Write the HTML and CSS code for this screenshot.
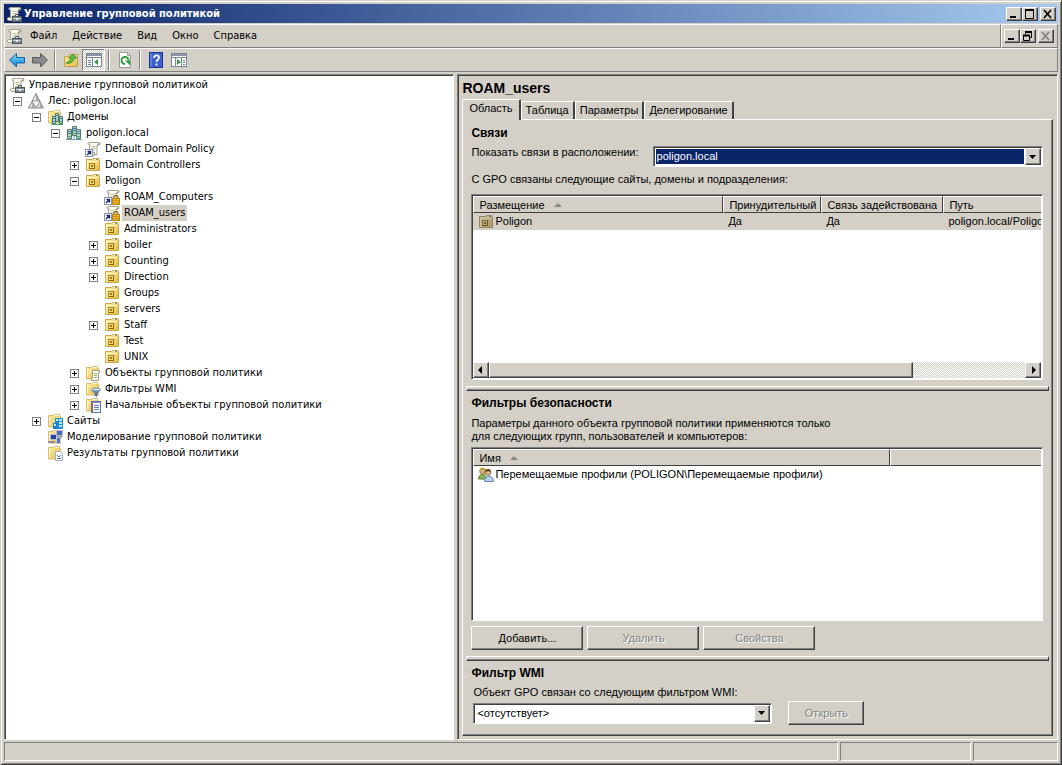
FILE: index.html
```html
<!DOCTYPE html>
<html lang="ru">
<head>
    <meta charset="UTF-8">
    <meta name="viewport" content="width=device-width, initial-scale=1.0">
    <title>Управление групповой политикой</title>
    <link rel="stylesheet" href="styles.css">
</head>
<body>
    <!-- Icon sprite -->
    <svg class="sprite" aria-hidden="true">
        <defs>
            <linearGradient id="g-gold" x1="0" y1="0" x2="1" y2="1">
                <stop offset="0" stop-color="#fff0a8"/>
                <stop offset="1" stop-color="#e6bd48"/>
            </linearGradient>
            <linearGradient id="g-blue" x1="0" y1="0" x2="0" y2="1">
                <stop offset="0" stop-color="#7fdcff"/>
                <stop offset="1" stop-color="#0a7fd0"/>
            </linearGradient>
        </defs>
        <symbol id="i-scroll" viewBox="0 0 16 16">
            <path d="M4.500 1.500h9c1.500 0 1.500 2.500 0 2.500h-1.500v9.500h-7.500z" fill="#fdfcf0" stroke="#a5a190"/>
            <path d="M4.500 1.500c-2 0-2 2.500 0 2.500h1" fill="#e9e5cd" stroke="#a5a190"/>
            <path d="M12 4h2c1.500-.5 1-2.500-.5-2.500" fill="#d8d3b8" stroke="#8d8a78"/>
            <path d="M6.500 5.500h4M6.500 7.500h4M6.500 9.500h3" stroke="#bdbaa9"/>
            <path d="M2.500 11.500h7v3h-7c-1.500 0-1.500-3 0-3z" fill="#f4f0da" stroke="#a5a190"/>
        </symbol>
        <symbol id="i-gpmc" viewBox="0 0 16 16">
            <use href="#i-scroll"/>
            <path d="M9.500 10v-1.500h3v1.500" fill="none" stroke="#4e565e"/>
            <rect x="6.500" y="10.500" width="9" height="5" fill="#7d8994" stroke="#4e565e"/>
            <path d="M7 12.500h8" stroke="#cdd5dc"/>
            <path d="M10 12h2v2h-2z" fill="#e8edf0"/>
        </symbol>
        <symbol id="i-forest" viewBox="0 0 16 16">
            <path d="M8 .5l3.800 7.500h-7.600z" fill="#f0f0f0" stroke="#6b6b6b" stroke-width=".8"/>
            <path d="M4.200 8l3.600 7h-7.300zM11.800 8l3.700 7h-7.300z" fill="#e4e4e4" stroke="#6b6b6b" stroke-width=".8"/>
            <path d="M4.200 8h7.600l-3.800 7z" fill="#f4f4f4" stroke="#8a8a8a" stroke-width=".6"/>
            <path d="M8 1.500v6.200h3zM4.200 9v5.700h3zM11.800 9v5.700h3z" fill="#a4a4a4"/>
        </symbol>
        <symbol id="i-folder" viewBox="0 0 16 16">
            <path d="M1.500 2.500h5l1-1h5v2h1v10.500h-12z" fill="url(#g-gold)" stroke="#dcbc66"/>
            <path d="M8 2.500h4" stroke="#fff"/>
            <path d="M2.500 4v9" stroke="#fff8d4"/>
        </symbol>
        <symbol id="i-ou" viewBox="0 0 16 16">
            <path d="M1.500 2.500h6l1.500-1h5v1.500h.5v10.500h-13z" fill="url(#g-gold)" stroke="#cba54a"/>
            <path d="M9.500 2.500h4" stroke="#fff"/>
            <path d="M11 2.500h2" stroke="#7f9a5a"/>
            <path d="M2.500 3.500v9.500M2.500 4.500h11" stroke="#fff6c4"/>
            <rect x="4.500" y="6.500" width="5" height="5" fill="#f4d878" stroke="#b08a28"/>
            <path d="M4.500 11.500h5v-5" fill="none" stroke="#8a6613"/>
            <path d="M6 8h2v2h-2z" fill="#94701a"/>
        </symbol>
        <symbol id="i-servers" viewBox="0 0 16 16">
            <path d="M6.500 1.500h4v9h-4z" fill="#a9c9b9" stroke="#56786d"/>
            <path d="M1.500 4.500h4v9h-4zM10.500 4.500h4v9h-4z" fill="#b9d6c6" stroke="#56786d"/>
            <path d="M7 3.500h3M7 5.500h3M2 6.500h3M2 8.500h3M11 6.500h3M11 8.500h3" stroke="#3e86a5"/>
            <path d="M2 11.500h3M11 11.500h3M7 8.500h3" stroke="#4fae5b"/>
            <path d="M0 14.500h16M8 11v4" stroke="#6d9ab8"/>
        </symbol>
        <symbol id="i-domains" viewBox="0 0 16 16">
            <use href="#i-folder"/>
            <path d="M8.500 4.500h3v8h-3z" fill="#a9c9b9" stroke="#56786d"/>
            <path d="M5.500 7.500h3v7h-3zM12.500 7.500h3v7h-3z" fill="#b9d6c6" stroke="#3f7683"/>
            <path d="M6 9.500h2M9 6.500h2M13 9.500h2" stroke="#3e86a5"/>
            <path d="M6 12.500h2M13 12.500h2M4 15.500h12" stroke="#4fa070"/>
        </symbol>
        <symbol id="i-shortcut" viewBox="0 0 16 16">
            <rect x=".5" y="8.500" width="7" height="7" fill="#fff" stroke="#8c96b0"/>
            <path d="M2 14l3-3M2.500 10.500h3v3" fill="none" stroke="#15257c" stroke-width="1.400"/>
        </symbol>
        <symbol id="i-gpo" viewBox="0 0 16 16">
            <use href="#i-scroll"/>
            <use href="#i-shortcut"/>
        </symbol>
        <symbol id="i-gpolock" viewBox="0 0 16 16">
            <use href="#i-scroll"/>
            <use href="#i-shortcut"/>
            <path d="M10 10v-2c0-2 4-2 4 0v2" fill="none" stroke="#8f6f1a" stroke-width="1.300"/>
            <rect x="8.500" y="9.500" width="7" height="6" fill="#efb22b" stroke="#b9830f"/>
            <path d="M9 11.500h6M9 13.500h6" stroke="#d0941c"/>
        </symbol>
        <symbol id="i-objects" viewBox="0 0 16 16">
            <use href="#i-folder"/>
            <path d="M7.500 5.500h7v2h-1v8h-7.500v-2h1.500z" fill="#fdfcf0" stroke="#a09c88"/>
            <path d="M9 8.500h3M9 10.500h3M9 12.500h3" stroke="#8fb27a"/>
        </symbol>
        <symbol id="i-filter" viewBox="0 0 16 16">
            <use href="#i-folder"/>
            <path d="M6.500 9h9l-3.500 3v3.500l-2-1v-2.500z" fill="#5e87b5" stroke="#4c6c94" stroke-width=".8"/>
            <ellipse cx="11" cy="8.500" rx="4.500" ry="1.500" fill="#d2e4f2" stroke="#6b8cab"/>
        </symbol>
        <symbol id="i-starter" viewBox="0 0 16 16">
            <use href="#i-folder"/>
            <rect x="6.500" y="4.500" width="9" height="11" fill="#f4f8fd" stroke="#5b74ac"/>
            <path d="M7 5.500h8" stroke="#7d94c8"/>
            <path d="M7.500 6v9" stroke="#c0574a"/>
            <path d="M9 8.500h5M9 10.500h5M9 12.500h5" stroke="#5c86c8"/>
        </symbol>
        <symbol id="i-sites" viewBox="0 0 16 16">
            <use href="#i-folder"/>
            <rect x="8" y="5" width="8" height="11" fill="#1c8fd4"/>
            <rect x="6" y="10" width="4" height="6" fill="#1c7fc4"/>
            <path d="M9 6h2v2h-2zM7 11h2v2h-2zM12 6h3v2h-3zM12 9h3v2h-3zM12 12h3v2h-3z" fill="#bdeaff"/>
        </symbol>
        <symbol id="i-modeling" viewBox="0 0 16 16">
            <use href="#i-folder"/>
            <rect x="9.500" y="1.500" width="6" height="5" fill="#4c67c4" stroke="#b9bdca"/>
            <path d="M10 8h5" stroke="#8c909c" stroke-width="2"/>
            <rect x="3.500" y="5.500" width="6" height="5" fill="#2943a5" stroke="#b9bdca"/>
            <path d="M1 13h7" stroke="#8c909c" stroke-width="2"/>
            <path d="M9.500 8.500h4v6h-4z" fill="#5a71bd" stroke="#c5c8d2"/>
        </symbol>
        <symbol id="i-results" viewBox="0 0 16 16">
            <use href="#i-folder"/>
            <path d="M8.500 6.500h5l2 2v7h-7z" fill="#fafcff" stroke="#9fb2c8"/>
            <path d="M10 10l2 2 2-2M10 13.500h4" fill="none" stroke="#3b7bc8"/>
        </symbol>
        <symbol id="i-users" viewBox="0 0 16 16">
            <circle cx="4.500" cy="4" r="2.800" fill="#d9b07f" stroke="#8b6a2c" stroke-width=".8"/>
            <path d="M2 4c0-4 6-4 6-1-2 0-4-1-6 1z" fill="#c9a12e"/>
            <path d="M.5 12c0-6 8-6 8 0z" fill="#8fb35a" stroke="#56782e"/>
            <circle cx="10" cy="5.500" r="2.800" fill="#e2b98a" stroke="#6b4a2c" stroke-width=".8"/>
            <path d="M7 5c0-4 6-4 6 0-2-1-4-1-6 0z" fill="#5b3b20"/>
            <path d="M6.500 14.500c0-7 9-7 9 0z" fill="#b7d0ee" stroke="#6589b5"/>
        </symbol>
        <symbol id="i-back" viewBox="0 0 16 16">
            <path d="M.5 8l7-6.500v4h8v5.500h-8v4z" fill="url(#g-blue)" stroke="#1763a8"/>
        </symbol>
        <symbol id="i-forward" viewBox="0 0 16 16">
            <path d="M15.500 8l-7-6.500v4h-8v5.500h8v4z" fill="#8b8b8b" stroke="#5a5a5a"/>
        </symbol>
        <symbol id="i-up" viewBox="0 0 16 16">
            <path d="M1.500 4.500h4l1-2h8v12h-13z" fill="url(#g-gold)" stroke="#c39f48"/>
            <path d="M3 11c3-1 5-3 5-5h-2.500l4.500-4 3.500 4h-2.500c0 4-4 6-8 5z" fill="#58c03f" stroke="#2d8426" stroke-width=".8"/>
        </symbol>
        <symbol id="i-tree" viewBox="0 0 16 16">
            <rect x=".5" y="1.500" width="15" height="13" fill="#fff" stroke="#7c8794"/>
            <path d="M1 3h14" stroke="#8b97a8" stroke-width="2"/>
            <path d="M1 5.500h14M6.500 6v8" stroke="#7c8794"/>
            <path d="M2 8.500h3M2 10.500h3M2 12.500h3" stroke="#5d7fae"/>
            <path d="M12 7v6l-4-3z" fill="#2f9e3a"/>
        </symbol>
        <symbol id="i-pane" viewBox="0 0 16 16">
            <rect x=".5" y="1.500" width="15" height="13" fill="#fff" stroke="#7c8794"/>
            <path d="M1 3h14" stroke="#8b97a8" stroke-width="2"/>
            <path d="M1 5.500h14M4.500 6v8M10.500 6v8" stroke="#7c8794"/>
            <path d="M6 7v6l4-3z" fill="#2f9e3a"/>
            <path d="M12 8.500h2M12 10.500h2M12 12.500h2" stroke="#5d7fae"/>
        </symbol>
        <symbol id="i-refresh" viewBox="0 0 16 16">
            <path d="M2.500 .5h8l3 3v12h-11z" fill="#fff" stroke="#9a9a9a"/>
            <path d="M10.500 .5v3h3" fill="none" stroke="#9a9a9a"/>
            <path d="M8 12a3.500 3.500 0 1 1 3.500-3.500" fill="none" stroke="#2fa03a" stroke-width="1.900"/>
            <path d="M8 8.500h5v5z" fill="#2fa03a"/>
        </symbol>
        <symbol id="i-help" viewBox="0 0 16 16">
            <rect x="1.500" y=".5" width="13" height="15" fill="#3a5fd0" stroke="#1c3690"/>
            <path d="M3 1v14" stroke="#7e9af0"/>
            <path d="M6 6c0-3.500 5-3.500 5-.5 0 2-2.500 2-2.500 4.500M8.500 11.500v2" fill="none" stroke="#fff" stroke-width="1.800"/>
        </symbol>
        <symbol id="i-min" viewBox="0 0 12 10">
            <path d="M2 8h6" stroke="currentColor" stroke-width="2"/>
        </symbol>
        <symbol id="i-max" viewBox="0 0 12 10">
            <path d="M1.500 1v8.500h8v-8.500" fill="none" stroke="currentColor"/>
            <path d="M1 1h9" stroke="currentColor" stroke-width="2"/>
        </symbol>
        <symbol id="i-restore" viewBox="0 0 12 10">
            <path d="M3.500 3v-1.500h6v5h-2M1.500 4.500h6v5h-6z" fill="none" stroke="currentColor"/>
            <path d="M3 1h7M1 4.500h7" stroke="currentColor" stroke-width="2"/>
        </symbol>
        <symbol id="i-close" viewBox="0 0 12 10">
            <path d="M2 1l7 8M9 1l-7 8" stroke="currentColor" stroke-width="1.700"/>
        </symbol>
        <symbol id="i-down" viewBox="0 0 8 8">
            <path d="M0 2h7l-3.500 4z" fill="currentColor"/>
        </symbol>
        <symbol id="i-left" viewBox="0 0 8 8">
            <path d="M5 0v8l-4-4z" fill="currentColor"/>
        </symbol>
        <symbol id="i-right" viewBox="0 0 8 8">
            <path d="M3 0v8l4-4z" fill="currentColor"/>
        </symbol>
        <symbol id="i-sort" viewBox="0 0 8 8">
            <path d="M0 6h8l-4-4z" fill="#8a877e"/>
        </symbol>
    </svg>

    <div class="window">
        <header class="titlebar">
            <svg class="icon"><use href="#i-gpmc"/></svg>
            <h1>Управление групповой политикой</h1>
            <div class="window-buttons">
                <button type="button" aria-label="Свернуть"><svg><use href="#i-min"/></svg></button>
                <button type="button" aria-label="Развернуть"><svg><use href="#i-max"/></svg></button>
                <button type="button" class="close" aria-label="Закрыть"><svg><use href="#i-close"/></svg></button>
            </div>
        </header>

        <div class="menubar">
            <nav class="menu">
                <svg class="icon"><use href="#i-gpmc"/></svg>
                <button type="button">Файл</button>
                <button type="button">Действие</button>
                <button type="button">Вид</button>
                <button type="button">Окно</button>
                <button type="button">Справка</button>
            </nav>
            <div class="window-buttons child-buttons">
                <button type="button" aria-label="Свернуть окно"><svg><use href="#i-min"/></svg></button>
                <button type="button" aria-label="Восстановить окно"><svg><use href="#i-restore"/></svg></button>
                <button type="button" class="close" disabled aria-label="Закрыть окно"><svg><use href="#i-close"/></svg></button>
            </div>
        </div>

        <div class="toolbar">
            <button type="button" aria-label="Назад"><svg class="icon"><use href="#i-back"/></svg></button>
            <button type="button" aria-label="Вперед"><svg class="icon"><use href="#i-forward"/></svg></button>
            <span class="separator"></span>
            <button type="button" aria-label="Вверх"><svg class="icon"><use href="#i-up"/></svg></button>
            <button type="button" class="pressed" aria-pressed="true" aria-label="Дерево консоли"><svg class="icon"><use href="#i-tree"/></svg></button>
            <span class="separator"></span>
            <button type="button" aria-label="Обновить"><svg class="icon"><use href="#i-refresh"/></svg></button>
            <span class="separator"></span>
            <button type="button" aria-label="Справка"><svg class="icon"><use href="#i-help"/></svg></button>
            <button type="button" aria-label="Панель действий"><svg class="icon"><use href="#i-pane"/></svg></button>
        </div>

        <main class="panes">
            <!-- Console tree -->
            <nav class="tree">
                <div class="node"><svg class="icon"><use href="#i-gpmc"/></svg><span class="name">Управление групповой политикой</span></div>
                <ul class="root">
                    <li>
                        <div class="node"><button type="button" class="toggle open" aria-label="Свернуть"></button><svg class="icon"><use href="#i-forest"/></svg><span class="name">Лес: poligon.local</span></div>
                        <ul>
                            <li>
                                <div class="node"><button type="button" class="toggle open" aria-label="Свернуть"></button><svg class="icon"><use href="#i-domains"/></svg><span class="name">Домены</span></div>
                                <ul>
                                    <li>
                                        <div class="node"><button type="button" class="toggle open" aria-label="Свернуть"></button><svg class="icon"><use href="#i-servers"/></svg><span class="name">poligon.local</span></div>
                                        <ul>
                                            <li><div class="node leaf"><svg class="icon"><use href="#i-gpo"/></svg><span class="name">Default Domain Policy</span></div></li>
                                            <li><div class="node"><button type="button" class="toggle" aria-label="Развернуть"></button><svg class="icon"><use href="#i-ou"/></svg><span class="name">Domain Controllers</span></div></li>
                                            <li>
                                                <div class="node"><button type="button" class="toggle open" aria-label="Свернуть"></button><svg class="icon"><use href="#i-ou"/></svg><span class="name">Poligon</span></div>
                                                <ul>
                                                    <li><div class="node leaf"><svg class="icon"><use href="#i-gpolock"/></svg><span class="name">ROAM_Computers</span></div></li>
                                                    <li><div class="node leaf"><svg class="icon"><use href="#i-gpolock"/></svg><span class="name selected">ROAM_users</span></div></li>
                                                    <li><div class="node leaf"><svg class="icon"><use href="#i-ou"/></svg><span class="name">Administrators</span></div></li>
                                                    <li><div class="node"><button type="button" class="toggle" aria-label="Развернуть"></button><svg class="icon"><use href="#i-ou"/></svg><span class="name">boiler</span></div></li>
                                                    <li><div class="node"><button type="button" class="toggle" aria-label="Развернуть"></button><svg class="icon"><use href="#i-ou"/></svg><span class="name">Counting</span></div></li>
                                                    <li><div class="node"><button type="button" class="toggle" aria-label="Развернуть"></button><svg class="icon"><use href="#i-ou"/></svg><span class="name">Direction</span></div></li>
                                                    <li><div class="node leaf"><svg class="icon"><use href="#i-ou"/></svg><span class="name">Groups</span></div></li>
                                                    <li><div class="node leaf"><svg class="icon"><use href="#i-ou"/></svg><span class="name">servers</span></div></li>
                                                    <li><div class="node"><button type="button" class="toggle" aria-label="Развернуть"></button><svg class="icon"><use href="#i-ou"/></svg><span class="name">Staff</span></div></li>
                                                    <li><div class="node leaf"><svg class="icon"><use href="#i-ou"/></svg><span class="name">Test</span></div></li>
                                                    <li><div class="node leaf"><svg class="icon"><use href="#i-ou"/></svg><span class="name">UNIX</span></div></li>
                                                </ul>
                                            </li>
                                            <li><div class="node"><button type="button" class="toggle" aria-label="Развернуть"></button><svg class="icon"><use href="#i-objects"/></svg><span class="name">Объекты групповой политики</span></div></li>
                                            <li><div class="node"><button type="button" class="toggle" aria-label="Развернуть"></button><svg class="icon"><use href="#i-filter"/></svg><span class="name">Фильтры WMI</span></div></li>
                                            <li><div class="node"><button type="button" class="toggle" aria-label="Развернуть"></button><svg class="icon"><use href="#i-starter"/></svg><span class="name">Начальные объекты групповой политики</span></div></li>
                                        </ul>
                                    </li>
                                </ul>
                            </li>
                            <li><div class="node"><button type="button" class="toggle" aria-label="Развернуть"></button><svg class="icon"><use href="#i-sites"/></svg><span class="name">Сайты</span></div></li>
                            <li><div class="node leaf"><svg class="icon"><use href="#i-modeling"/></svg><span class="name">Моделирование групповой политики</span></div></li>
                            <li><div class="node leaf"><svg class="icon"><use href="#i-results"/></svg><span class="name">Результаты групповой политики</span></div></li>
                        </ul>
                    </li>
                </ul>
            </nav>

            <!-- Details of the selected policy -->
            <section class="details">
                <h2>ROAM_users</h2>
                <div class="tabs" role="tablist">
                    <button type="button" role="tab" class="active" aria-selected="true">Область</button>
                    <button type="button" role="tab">Таблица</button>
                    <button type="button" role="tab">Параметры</button>
                    <button type="button" role="tab">Делегирование</button>
                </div>
                <div class="tab-page">
                    <section class="group links">
                        <h3>Связи</h3>
                        <div class="field">
                            <label for="location">Показать связи в расположении:</label>
                            <span class="combo focused">
                                <select id="location">
                                    <option>poligon.local</option>
                                </select>
                                <span class="combo-arrow"><svg><use href="#i-down"/></svg></span>
                            </span>
                        </div>
                        <p>С GPO связаны следующие сайты, домены и подразделения:</p>
                        <div class="list links-list">
                            <div class="list-body">
                                <table class="links-table">
                                    <thead>
                                        <tr>
                                            <th class="col-place">Размещение <svg class="sort"><use href="#i-sort"/></svg></th>
                                            <th class="col-forced">Принудительный</th>
                                            <th class="col-enabled">Связь задействована</th>
                                            <th>Путь</th>
                                        </tr>
                                    </thead>
                                    <tbody>
                                        <tr class="current">
                                            <td><span class="cell"><svg class="icon dimmed"><use href="#i-ou"/></svg>Poligon</span></td>
                                            <td>Да</td>
                                            <td>Да</td>
                                            <td>poligon.local/Poligo</td>
                                        </tr>
                                    </tbody>
                                </table>
                            </div>
                            <div class="scrollbar">
                                <button type="button" aria-label="Влево"><svg><use href="#i-left"/></svg></button>
                                <div class="track"><div class="thumb"></div></div>
                                <button type="button" aria-label="Вправо"><svg><use href="#i-right"/></svg></button>
                            </div>
                        </div>
                    </section>
                    <hr>
                    <section class="group security">
                        <h3>Фильтры безопасности</h3>
                        <p>Параметры данного объекта групповой политики применяются только<br>для следующих групп, пользователей и компьютеров:</p>
                        <div class="list security-list">
                            <div class="list-body">
                                <table>
                                    <thead>
                                        <tr>
                                            <th class="col-name">Имя <svg class="sort"><use href="#i-sort"/></svg></th>
                                            <th class="col-rest"></th>
                                        </tr>
                                    </thead>
                                    <tbody>
                                        <tr>
                                            <td colspan="2"><span class="cell"><svg class="icon"><use href="#i-users"/></svg>Перемещаемые профили (POLIGON\Перемещаемые профили)</span></td>
                                        </tr>
                                    </tbody>
                                </table>
                            </div>
                        </div>
                        <div class="actions">
                            <button type="button" class="btn">Добавить...</button>
                            <button type="button" class="btn" disabled>Удалить</button>
                            <button type="button" class="btn" disabled>Свойства</button>
                        </div>
                    </section>
                    <hr>
                    <section class="group wmi">
                        <h3>Фильтр WMI</h3>
                        <label for="wmi">Объект GPO связан со следующим фильтром WMI:</label>
                        <div class="wmi-row">
                            <span class="combo">
                                <select id="wmi">
                                    <option>&lt;отсутствует&gt;</option>
                                </select>
                                <span class="combo-arrow"><svg><use href="#i-down"/></svg></span>
                            </span>
                            <button type="button" class="btn small" disabled>Открыть</button>
                        </div>
                    </section>
                </div>
            </section>
        </main>

        <footer class="statusbar">
            <span class="status-main"></span>
            <span class="status-mid"></span>
            <span class="status-end"></span>
        </footer>
    </div>
</body>
</html>
```
FILE: styles.css
```css
/* Classic Windows palette */
:root {
    --face: #d4d0c8;
    --light: #ffffff;
    --shadow: #808080;
    --dark: #404040;
    --select: #0a246a;
    --ui: "DejaVu Sans Condensed", Tahoma, sans-serif;
    --dialog: "Liberation Sans", Arial, sans-serif;
}

* {
    box-sizing: border-box;
}

body {
    margin: 0;
    background: var(--face);
    color: #000;
    font: 11px/16px var(--ui);
}

h1, h2, h3, p, ul {
    margin: 0;
    padding: 0;
}

button, select {
    margin: 0;
    padding: 0;
    border: 0;
    border-radius: 0;
    background: none;
    color: inherit;
    font: inherit;
}

.sprite {
    display: block;
    width: 0;
    height: 0;
}

.icon {
    display: block;
    width: 16px;
    height: 16px;
    flex: none;
}

/* Window frame */
.window {
    display: flex;
    flex-direction: column;
    min-height: 100vh;
    padding: 3px;
    border: 1px solid;
    border-color: var(--face) var(--dark) var(--dark) var(--face);
    box-shadow: inset 1px 1px var(--light), inset -1px -1px var(--shadow);
}

.titlebar {
    display: flex;
    align-items: center;
    height: 19px;
    padding: 0 2px;
    gap: 2px;
    background: linear-gradient(to right, #0a246a, #a6caf0);
    color: #fff;
}

.titlebar h1 {
    flex: 1;
    font-size: 11px;
    line-height: 16px;
}

/* Caption buttons */
.window-buttons {
    display: flex;
}

.window-buttons button {
    display: flex;
    align-items: center;
    justify-content: center;
    width: 16px;
    height: 14px;
    background: var(--face);
    color: #000;
    border: 1px solid;
    border-color: var(--light) var(--dark) var(--dark) var(--light);
    box-shadow: inset -1px -1px var(--shadow);
}

.window-buttons .close {
    margin-left: 2px;
}

.window-buttons button:disabled {
    color: var(--shadow);
}

.window-buttons svg {
    width: 12px;
    height: 10px;
}

/* Menu and toolbar */
.menubar {
    display: flex;
    height: 24px;
    margin-top: 1px;
}

.menu, .child-buttons, .toolbar {
    align-items: center;
    border: 1px solid;
    border-color: var(--light) var(--shadow) var(--shadow) var(--light);
}

.menu {
    display: flex;
    flex: 1;
    gap: 1px;
    padding-left: 1px;
}

.menu button {
    padding: 0 7px;
}

.child-buttons {
    padding: 0 3px 0 2px;
}

.toolbar {
    display: flex;
    height: 24px;
}

.toolbar button {
    display: flex;
    align-items: center;
    justify-content: center;
    width: 23px;
    height: 22px;
}

.toolbar .pressed {
    border: 1px solid;
    border-color: var(--shadow) var(--light) var(--light) var(--shadow);
    background: repeating-conic-gradient(#fff 0 25%, #d4d0c8 0 50%) 0 0 / 2px 2px;
}

.separator {
    width: 2px;
    height: 20px;
    margin: 0 3px;
    border-left: 1px solid var(--shadow);
    border-right: 1px solid var(--light);
}

/* Split view */
.panes {
    display: grid;
    grid-template-columns: 3fr 4fr;
    gap: 3px;
    flex: 1;
    margin-top: 2px;
}

.tree, .details {
    min-width: 0;
    border: 1px solid;
    border-color: var(--shadow) var(--light) var(--light) var(--shadow);
    box-shadow: inset 1px 1px var(--dark);
}

.tree {
    padding: 2px 0 0 4px;
    background: #fff;
    white-space: nowrap;
    overflow: hidden;
}

.tree ul {
    padding-left: 19px;
    list-style: none;
}

.tree .root {
    padding-left: 4px;
}

.node {
    display: flex;
    align-items: center;
    height: 16px;
}

.leaf {
    padding-left: 15px;
}

.name {
    margin-left: 2px;
    padding: 0 2px;
}

.selected {
    background: var(--face);
}

/* Plus and minus boxes */
.toggle {
    width: 9px;
    height: 9px;
    margin-right: 6px;
    border: 1px solid var(--shadow);
    background:
        linear-gradient(#000, #000) center / 5px 1px no-repeat,
        linear-gradient(#000, #000) center / 1px 5px no-repeat;
}

.toggle.open {
    background: linear-gradient(#000, #000) center / 5px 1px no-repeat;
}

/* Details pane */
.details {
    display: flex;
    flex-direction: column;
    padding: 4px 4px 3px;
    font-family: var(--dialog);
    line-height: 13px;
}

.details h2 {
    font-size: 14px;
    line-height: 18px;
}

.tabs {
    display: flex;
    align-items: flex-end;
    height: 22px;
}

.tabs button {
    height: 18px;
    padding: 0 4px;
    border: solid;
    border-width: 1px 2px 0 1px;
    border-color: var(--light) var(--dark) var(--dark) var(--light);
    border-radius: 2px 2px 0 0;
}

.tabs .active {
    position: relative;
    height: 21px;
    margin-bottom: -1px;
    padding: 0 6px 3px;
    background: var(--face);
}

.tab-page {
    display: flex;
    flex-direction: column;
    flex: 1;
    padding: 5px 3px 10px;
    border: 1px solid;
    border-color: var(--light) var(--dark) var(--dark) var(--light);
    box-shadow: inset -1px -1px var(--shadow);
}

.group {
    display: flex;
    flex-direction: column;
    padding: 0 6px 0 5px;
}

.group h3 {
    font-size: 12px;
    line-height: 16px;
}

.tab-page hr {
    width: 100%;
    height: 5px;
    margin: 6px 0 4px;
    border: 1px solid;
    border-color: var(--light) var(--dark) var(--dark) var(--light);
    box-shadow: inset 0 -1px var(--shadow);
}

.field {
    display: flex;
    align-items: flex-start;
    gap: 14px;
    margin: 5px 0 6px;
}

/* Combo boxes */
.combo {
    display: flex;
    flex: 1;
    height: 21px;
    padding: 1px;
    background: #fff;
    border: 1px solid;
    border-color: var(--shadow) var(--light) var(--light) var(--shadow);
    box-shadow: inset 1px 1px var(--dark);
}

.combo select {
    flex: 1;
    min-width: 0;
    padding-left: 1px;
    border: 1px solid #fff;
    appearance: none;
    outline: 0;
}

.focused select {
    background: var(--select);
    color: #fff;
}

.combo-arrow, .scrollbar button {
    display: flex;
    align-items: center;
    justify-content: center;
    width: 16px;
    background: var(--face);
    border: 1px solid;
    border-color: var(--light) var(--dark) var(--dark) var(--light);
    box-shadow: inset -1px -1px var(--shadow);
    pointer-events: none;
}

.combo-arrow svg, .scrollbar svg, .sort {
    width: 8px;
    height: 8px;
}

/* List views */
.list {
    display: flex;
    flex-direction: column;
    margin-top: 8px;
    padding: 1px;
    background: #fff;
    border: 1px solid;
    border-color: var(--shadow) var(--light) var(--light) var(--shadow);
    box-shadow: inset 1px 1px var(--dark);
}

.list-body {
    flex: 1;
    overflow: hidden;
}

.links-list {
    min-height: 186px;
}

.list table {
    width: 100%;
    table-layout: fixed;
    border-collapse: separate;
    border-spacing: 0;
    white-space: nowrap;
}

.list .links-table {
    width: 700px;
}

.list th {
    height: 17px;
    padding: 1px 5px 0;
    background: var(--face);
    border: 1px solid;
    border-color: var(--light) var(--dark) var(--dark) var(--light);
    font-weight: normal;
    text-align: left;
}

.list .col-rest {
    border-right: 0;
}

.list td {
    height: 17px;
    padding: 0 5px;
}

.current {
    background: var(--face);
}

.col-place {
    width: 250px;
}

.col-forced {
    width: 98px;
}

.col-enabled {
    width: 122px;
}

.col-name {
    width: 417px;
}

.cell {
    display: flex;
    align-items: center;
    gap: 1px;
}

.dimmed {
    filter: brightness(0.8) saturate(0.6);
}

.sort {
    margin-left: 6px;
}

.scrollbar {
    display: flex;
    height: 16px;
}

.track {
    flex: 1;
    background: repeating-conic-gradient(#fff 0 25%, #d4d0c8 0 50%) 0 0 / 2px 2px;
}

.thumb {
    width: 79%;
    height: 100%;
    background: var(--face);
    border: 1px solid;
    border-color: var(--light) var(--dark) var(--dark) var(--light);
    box-shadow: inset -1px -1px var(--shadow);
}

/* Security filtering takes the spare height */
.security {
    flex: 1;
}

.security p {
    margin-top: 6px;
}

.security-list {
    flex: 1;
    margin-top: 4px;
}

.actions {
    display: flex;
    gap: 4px;
    margin-top: 5px;
}

.btn {
    width: 112px;
    height: 24px;
    background: var(--face);
    border: 1px solid;
    border-color: var(--light) var(--dark) var(--dark) var(--light);
    box-shadow: inset -1px -1px var(--shadow);
}

.btn:disabled {
    color: var(--shadow);
    text-shadow: 1px 1px #fff;
}

.small {
    width: 76px;
}

.wmi label {
    margin: 5px 0 2px 2px;
}

.wmi-row {
    display: flex;
    align-items: center;
    gap: 16px;
    padding-left: 2px;
}

.wmi-row .combo {
    flex: none;
    width: 299px;
}

/* Status bar */
.statusbar {
    display: flex;
    gap: 2px;
    height: 19px;
    margin-top: 2px;
}

.statusbar span {
    border: 1px solid;
    border-color: var(--shadow) var(--light) var(--light) var(--shadow);
}

.status-main {
    flex: 1;
}

.status-mid {
    width: 131px;
}

.status-end {
    width: 85px;
}
```
